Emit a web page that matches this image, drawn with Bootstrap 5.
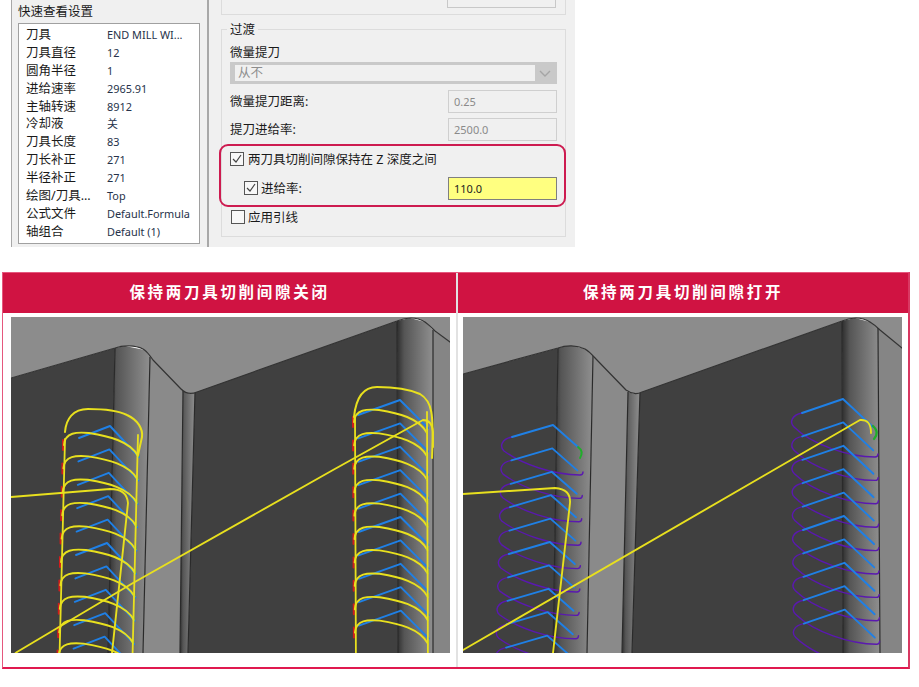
<!DOCTYPE html>
<html lang="zh-CN">
<head>
  <meta charset="UTF-8">
  <title>保持两刀具切削间隙</title>
  <link href="https://cdn.jsdelivr.net/npm/bootstrap@5.3.0/dist/css/bootstrap.min.css" rel="stylesheet">
  <style>
    body {
      background: #fff;
      font-family: "Noto Sans", "Noto Sans CJK SC", sans-serif;
      font-size: 12.5px;
      line-height: 18px;
      color: #1a1a1a;
    }

    /* dialog screenshot */
    .dlg {
      width: 564px;
      height: 247px;
      margin-left: 11px;
      background: #f0f0f0;
      gap: 12px;
    }
    .quick-pane {
      width: 198px;
      padding: 3px 7px 0 6px;
      border-left: 1px solid #a8a8a8;
      border-right: 2px solid #a8a8a8;
    }
    .quick-title { height: 20px; }
    .quick-list {
      height: 221px;
      padding: 2px 0 0 7px;
      background: #fff;
      border: 1px solid #a0a0a0;
    }
    .quick-row { height: 17.9px; line-height: 17.9px; }
    .quick-key { width: 81px; white-space: nowrap; }
    .quick-val { font-size: 10.9px; color: #26324a; white-space: nowrap; }

    .right-pane { width: 345px; }
    .group-stub {
      height: 15px;
      border: 1px solid #dcdcdc;
      border-top: 0;
      padding-right: 9px;
    }
    .stub-input {
      width: 109px;
      height: 8px;
      background: #f0f0f0;
      border: 1px solid #c8c8c8;
      border-top: 0;
    }
    .group-box {
      height: 208px;
      margin-top: 14px;
      padding: 0 8px 0 8px;
      border: 1px solid #dcdcdc;
      position: relative;
    }
    .group-legend {
      position: absolute;
      top: -9px;
      left: 5px;
      padding: 0 3px;
      background: #f0f0f0;
    }
    .sel-label { padding-top: 14px; height: 32px; }
    .sel-box {
      height: 22px;
      background: #c9c9c9;
      padding: 3px 0 3px 5px;
      width: 327px;
    }
    .sel-inner {
      width: 300px;
      height: 16px;
      line-height: 16px;
      padding-left: 3px;
      background: #f0f0f0;
      color: #8d8d8d;
    }
    .field-row { height: 28px; width: 327px; }
    .field-gap { margin-top: 3px; }
    .field-label { padding-top: 2px; }
    .field-input {
      width: 109px;
      height: 23px;
      padding-left: 5px;
      line-height: 21px;
      font-size: 11px;
      border: 1px solid #cfcfcf;
      color: #8a8a8a;
    }
    .hi-box {
      width: 347px;
      height: 63px;
      margin: 1px 0 0 -11px;
      padding: 0 9px 0 9px;
      border: 2px solid #cd1b50;
      border-radius: 9px;
    }
    .check-row { height: 26px; gap: 4px; }
    .check-row.feed-row { height: 32px; gap: 3px; margin-left: 14px; }
    .check-row.lead-row { height: 18px; gap: 3px; margin: 1px 0 0 1px; }
    .tick-box {
      width: 14px;
      height: 14px;
      flex: none;
      background: #f7f7f7;
      border: 1px solid #555;
    }
    .hi-input {
      color: #222;
      background: #ffff80;
      border: 1px solid #7f7f7f;
      margin-right: -2px;
    }

    /* comparison table */
    .compare {
      width: 908px;
      height: 397px;
      margin: 25px 0 0 2px;
      border: 1px solid #e5577d;
      border-bottom: 2px solid #e0194f;
      border-right: 2px solid #d93862;
    }
    .cmp-col { width: 453px; }
    .cmp-col + .cmp-col { width: 452px; border-left: 2px solid #e2e2e2; }
    .cmp-head {
      height: 40px;
      line-height: 38px;
      background: #d01342;
      color: #fff;
      font-size: 15.5px;
      font-weight: 700;
      letter-spacing: 2.7px;
      text-align: center;
    }
    .cmp-body { padding: 4px 0 0 8px; }
    .cmp-col + .cmp-col .cmp-body { padding-left: 5px; }
    .scene { display: block; width: 439px; height: 336px; filter: blur(0.4px); }
  </style>
</head>
<body>

  <!-- Dialog -->
  <div class="dlg d-flex">
    <div class="quick-pane">
      <div class="quick-title">快速查看设置</div>
      <div class="quick-list" id="quickList"></div>
    </div>
    <div class="right-pane">
      <div class="group-stub d-flex justify-content-end"><div class="stub-input"></div></div>
      <div class="group-box">
        <div class="group-legend">过渡</div>
        <div class="sel-label">微量提刀</div>
        <div class="sel-box d-flex">
          <div class="sel-inner">从不</div>
          <svg class="ms-auto me-1" width="16" height="16" viewBox="0 0 16 16"><path d="M3 6l5 5 5-5" fill="none" stroke="#a5a5a5" stroke-width="1.4"/></svg>
        </div>
        <div class="field-row field-gap d-flex justify-content-between align-items-center">
          <span class="field-label">微量提刀距离:</span><div class="field-input">0.25</div>
        </div>
        <div class="field-row d-flex justify-content-between align-items-center">
          <span class="field-label">提刀进给率:</span><div class="field-input">2500.0</div>
        </div>
        <div class="hi-box">
          <div class="check-row d-flex align-items-center">
            <span class="tick-box"><svg class="d-block" width="12" height="12" viewBox="0 0 12 12"><path d="M2 6l3 3 5-7" fill="none" stroke="#444" stroke-width="1.2"/></svg></span>
            <span class="field-label">两刀具切削间隙保持在 Z 深度之间</span>
          </div>
          <div class="check-row feed-row d-flex align-items-center">
            <span class="tick-box"><svg class="d-block" width="12" height="12" viewBox="0 0 12 12"><path d="M2 6l3 3 5-7" fill="none" stroke="#444" stroke-width="1.2"/></svg></span>
            <span class="field-label">进给率:</span>
            <div class="field-input hi-input ms-auto">110.0</div>
          </div>
        </div>
        <div class="check-row lead-row d-flex align-items-center">
          <span class="tick-box"></span>
          <span class="field-label">应用引线</span>
        </div>
      </div>
    </div>
  </div>

  <!-- Comparison -->
  <div class="compare d-flex">
    <div class="cmp-col">
      <div class="cmp-head">保持两刀具切削间隙关闭</div>
      <div class="cmp-body"><svg class="scene" id="sceneOff" viewBox="0 0 439 336"></svg></div>
    </div>
    <div class="cmp-col">
      <div class="cmp-head">保持两刀具切削间隙打开</div>
      <div class="cmp-body"><svg class="scene" id="sceneOn" viewBox="0 0 439 336"></svg></div>
    </div>
  </div>

  <script src="https://cdn.jsdelivr.net/npm/bootstrap@5.3.0/dist/js/bootstrap.bundle.min.js"></script>
  <script>
    const rows = [
      ['刀具', 'END MILL WI...'], ['刀具直径', '12'], ['圆角半径', '1'],
      ['进给速率', '2965.91'], ['主轴转速', '8912'], ['冷却液', '关'],
      ['刀具长度', '83'], ['刀长补正', '271'], ['半径补正', '271'],
      ['绘图/刀具...', 'Top'], ['公式文件', 'Default.Formula'], ['轴组合', 'Default (1)']
    ];
    document.getElementById('quickList').innerHTML = rows.map(r =>
      `<div class="quick-row d-flex"><span class="quick-key">${r[0]}</span><span class="quick-val">${r[1]}</span></div>`
    ).join('');

    const BLUE = '#1f80e6', YEL = '#e8e01e', PUR = '#5a18b0';
    const PERIOD = 23.4;

    function line(d, color, w, extra) {
      return `<path d="${d}" fill="none" stroke="${color}" stroke-width="${w}" stroke-linejoin="round" stroke-linecap="round" ${extra || ''}/>`;
    }

    // grey part: walls and fillets, then the rounded top face over them. e = edge points, b = x of the bands at the bottom
    function part(e, b, id, topD) {
      const grad = `<defs>
        <linearGradient id="${id}"><stop offset="0" stop-color="#2e2e2e"/><stop offset=".2" stop-color="#555"/><stop offset="1" stop-color="#8f8f8f"/></linearGradient>
      </defs>`;
      const poly = (pts, fill) => `<polygon points="${pts.map(p => p.join(',')).join(' ')}" fill="${fill}"/>`;
      let s = grad;
      s += poly([e[0], e[1], [b[0], 336], [0, 336]], '#404040');
      s += poly([e[1], e[2], e[3], e[4], [b[1], 336], [b[0], 336]], `url(#${id})`);
      s += poly([e[4], e[5], [b[2], 336], [b[1], 336]], '#8a8a8a');
      s += poly([e[5], e[6], e[7], [b[3], 336], [b[2], 336]], `url(#${id})`);
      s += poly([e[7], e[8], [b[4], 336], [b[3], 336]], '#404040');
      s += poly([e[8], e[9], e[10], e[11], [b[5], 336], [b[4], 336]], `url(#${id})`);
      s += poly([e[11], e[12], [439, 336], [b[5], 336]], '#858585');
      [[e[1], b[0]], [e[4], b[1]], [e[5], b[2]], [e[7], b[3]], [e[8], b[4]], [e[11], b[5]]].forEach(v => {
        s += line(`M${v[0].join(',')} L${v[1]},336`, '#2a2a2a', 1.2);
      });
      s += `<path d="${topD} L439,0 L0,0 Z" fill="#8c8c8c"/>`;
      s += line(topD, '#333', 1.2);
      return s;
    }

    function blueAt(x0, y0, px, py, x1, y1) {
      return line(`M${x0},${y0} L${px},${py} L${x1},${y1}`, BLUE, 1.9);
    }

    // toolpath with the keep-gap option off: yellow loops over the blue cuts
    function coilOff(o) {
      let s = '';
      for (let k = 0; k < 10; k++) {
        const dy = k * PERIOD, dx = k * o.drift;
        const y = v => +(v + dy).toFixed(1), x = v => +(v + dx).toFixed(1);
        s += blueAt(x(o.bx0), y(o.by0), x(o.px), y(o.py), x(o.bx1), y(o.by1));
        s += line(`M${x(o.lx)},${y(o.ly - 5)} v10`, '#d01c1c', 2);
        s += line(`M${x(o.lx + 1)},${y(o.ly)} C${x(o.lx + 2)},${y(o.ly - 13)} ${x(o.lx + 14)},${y(o.ly - 13)} ${x(o.lx + 26)},${y(o.ly - 12)} C${x(o.lx + 45)},${y(o.ly - 9)} ${x(o.rx - 8)},${y(o.ly - 4)} ${x(o.rx)},${y(o.ly + 11)}`, YEL, 1.9);
        s += line(`M${x(o.rx)},${y(o.ly + 8)} v3`, '#58b81e', 1.6);
      }
      const d = 9 * o.drift;
      s += line(`M${o.lx + 2},${o.ly - 6} L${o.lx + 2 + d},336`, YEL, 1.8);
      s += line(`M${o.rx},${o.ly - 10} L${o.rx + d},336`, YEL, 1.8);
      s += line(o.top, YEL, 2);
      return s;
    }

    // toolpath with the keep-gap option on: thin purple links between the cuts
    function coilOn(o) {
      let s = '';
      for (let k = 0; k < 10; k++) {
        const dy = k * PERIOD, dx = k * o.drift;
        const y = v => +(v + dy).toFixed(1), x = v => +(v + dx).toFixed(1);
        const low = o.by0 + o.drop;
        s += line(`M${x(o.bx0)},${y(o.by0)} C${x(o.bx0 - 10)},${y(o.by0 + 2)} ${x(o.bx0 - 13)},${y(o.by0 + 9)} ${x(o.bx0 - 8)},${y(o.by0 + 14)} C${x(o.bx0 + 10)},${y(o.by0 + o.drop * .72)} ${x(o.bx1 - 24)},${y(low)} ${x(o.bx1 + 2)},${y(low)} Q${x(o.bx1 + 5)},${y(low)} ${x(o.bx1 + 5)},${y(low - 3)}`, PUR, 1.4);
        s += blueAt(x(o.bx0), y(o.by0), x(o.px), y(o.py), x(o.bx1), y(o.by1));
      }
      return s;
    }

    const edgeOff = [[0,61],[104,31],[114,29],[134,33],[139,40],[172,73],[179,77],[184,75],[386,4],[399,1],[414,5],[422,13],[439,25]];
    const edgeOn = [[0,57],[95,31],[107,28],[123,32],[130,38],[165,75],[172,77],[177,75],[379,4],[392,1],[407,5],[415,11],[439,31]];

    document.getElementById('sceneOff').innerHTML =
      part(edgeOff, [97, 132, 169, 177, 387, 422], 'fOff', 'M0,61 L104,31 C112,28 124,28 132,32 C136,34 138,38 142,43 L170,72 Q177,79 186,75 L386,4 C396,0 406,0 414,5 Q418,8 424,14 L439,25') +
      coilOff({ drift: -0.6, bx0: 68, by0: 121, px: 99, py: 109, bx1: 128, by1: 140, lx: 52, ly: 128, rx: 127,
        top: 'M54,115 C55,102 62,92 77,92 C95,92 108,94 116,98 C127,103 132,112 131,120 L127,138' }) +
      coilOff({ drift: 0.1, bx0: 347, by0: 98, px: 389, py: 83, bx1: 417, by1: 111, lx: 342, ly: 105, rx: 416,
        top: 'M343,100 C345,80 352,70 366,70 C385,70 400,73 409,77 C421,84 423,96 421,141' }) +
      line('M0,180 L99,172 Q116,172 117,186 L101,336', YEL, 1.9) +
      line('M0,340 L6,335 L122,266 L322,153 L412,103 Q421,103 422,115 L422,130', YEL, 1.9);

    document.getElementById('sceneOn').innerHTML =
      part(edgeOn, [90, 124, 159, 169, 380, 417], 'fOn', 'M0,57 L95,31 C103,28 114,28 122,32 C127,35 130,39 133,42 L163,73 Q171,79 179,75 L379,4 C389,0 399,0 407,5 Q412,8 417,13 L439,31') +
      coilOn({ drift: -0.65, bx0: 49, by0: 120, px: 90, py: 108, bx1: 115, by1: 130, drop: 38 }) +
      coilOn({ drift: 0.2, bx0: 339, by0: 96, px: 380, py: 82, bx1: 410, by1: 110, drop: 44 }) +
      line('M115,130 Q121,134 117,141', '#1fae2a', 1.9) +
      line('M410,109 Q417,115 411,122', '#1fae2a', 2.2) +
      line('M0,177 L92,171 Q108,172 107,186 L90,336', YEL, 1.9) +
      line('M0,333 L302,158 L397,103 Q408,102 408,116', YEL, 1.9);
  </script>
</body>
</html>
